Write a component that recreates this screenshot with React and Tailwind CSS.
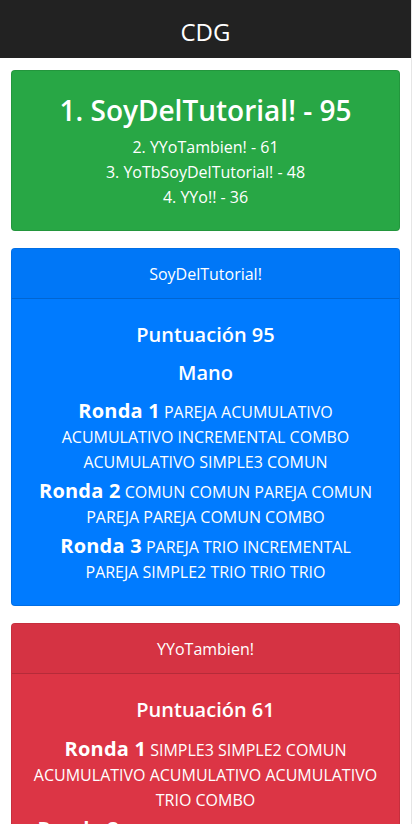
import React from 'react';

const ranking = [
  { pos: 1, name: 'SoyDelTutorial!', score: 95 },
  { pos: 2, name: 'YYoTambien!', score: 61 },
  { pos: 3, name: 'YoTbSoyDelTutorial!', score: 48 },
  { pos: 4, name: 'YYo!!', score: 36 },
];

const players = [
  {
    name: 'SoyDelTutorial!',
    score: 95,
    mano: true,
    card: 'bg-[#007bff]',
    head: 'bg-[#0077f7]',
    rondas: [
      'PAREJA ACUMULATIVO ACUMULATIVO INCREMENTAL COMBO ACUMULATIVO SIMPLE3 COMUN',
      'COMUN COMUN PAREJA COMUN PAREJA PAREJA COMUN COMBO',
      'PAREJA TRIO INCREMENTAL PAREJA SIMPLE2 TRIO TRIO TRIO',
    ],
  },
  {
    name: 'YYoTambien!',
    score: 61,
    mano: false,
    card: 'bg-[#dc3545]',
    head: 'bg-[#d53343]',
    rondas: [
      'SIMPLE3 SIMPLE2 COMUN ACUMULATIVO ACUMULATIVO ACUMULATIVO TRIO COMBO',
      'PAREJA COMUN COMUN SIMPLE2 PAREJA COMBO',
      'COMUN PAREJA TRIO SIMPLE3 COMUN',
    ],
  },
  {
    name: 'YoTbSoyDelTutorial!',
    score: 48,
    mano: false,
    card: 'bg-[#ffc107]',
    head: 'bg-[#f7bb07]',
    rondas: [
      'COMUN PAREJA SIMPLE2 COMBO',
      'PAREJA PAREJA COMUN TRIO',
      'SIMPLE3 COMUN COMUN',
    ],
  },
];

const PlayerCard = ({ p }) => (
  <div className={`${p.card} text-white rounded-[4px] border border-black/10 mb-[17px]`}>
    <div className={`${p.head} border-b border-black/15 rounded-t-[4px] h-[50px] flex items-center justify-center text-[16px]`}>
      {p.name}
    </div>
    <div className="px-[20px] pt-[21px] pb-[20px] text-center">
      <h5 className={`text-[20px] font-semibold leading-[30px] ${p.mano ? 'mb-[8px]' : 'mb-[13px]'}`}>
        Puntuación {p.score}
      </h5>
      {p.mano && <h5 className="text-[20px] font-semibold leading-[30px] mb-[12px]">Mano</h5>}
      {p.rondas.map((r, i) => (
        <p key={i} className="text-[16px] leading-[25px] mb-[5px] last:mb-0">
          <b className="text-[20px] leading-[16px] font-bold tracking-[0.2px]">Ronda {i + 1}</b> {r}
        </p>
      ))}
    </div>
  </div>
);

const App = () => {
  return (
    <div className="flex w-[413px] min-h-screen bg-white" style={{ fontFamily: '"Open Sans", "Noto Sans", sans-serif' }}>
      <div className="w-[411px] shrink-0">
        <nav className="bg-[#222222] h-[58px] flex items-center justify-center pt-[6px]">
          <span className="text-white text-[24px] leading-none">CDG</span>
        </nav>

        <div className="px-[11px] pt-[12px]">
          <div className="bg-[#28a745] text-white rounded-[4px] border border-black/10 text-center pt-[22px] pb-[20px] mb-[17px]">
            <h3 className="text-[28px] font-semibold leading-[34px] mb-[8px]">
              {ranking[0].pos}. {ranking[0].name} - {ranking[0].score}
            </h3>
            {ranking.slice(1).map((r) => (
              <div key={r.pos} className="text-[16px] leading-[25px]">
                {r.pos}. {r.name} - {r.score}
              </div>
            ))}
          </div>

          {players.map((p) => (
            <PlayerCard key={p.name} p={p} />
          ))}
        </div>
      </div>
      <div className="w-[2px] border-l border-[#e6e6e6]"></div>
    </div>
  );
};

export default App;
